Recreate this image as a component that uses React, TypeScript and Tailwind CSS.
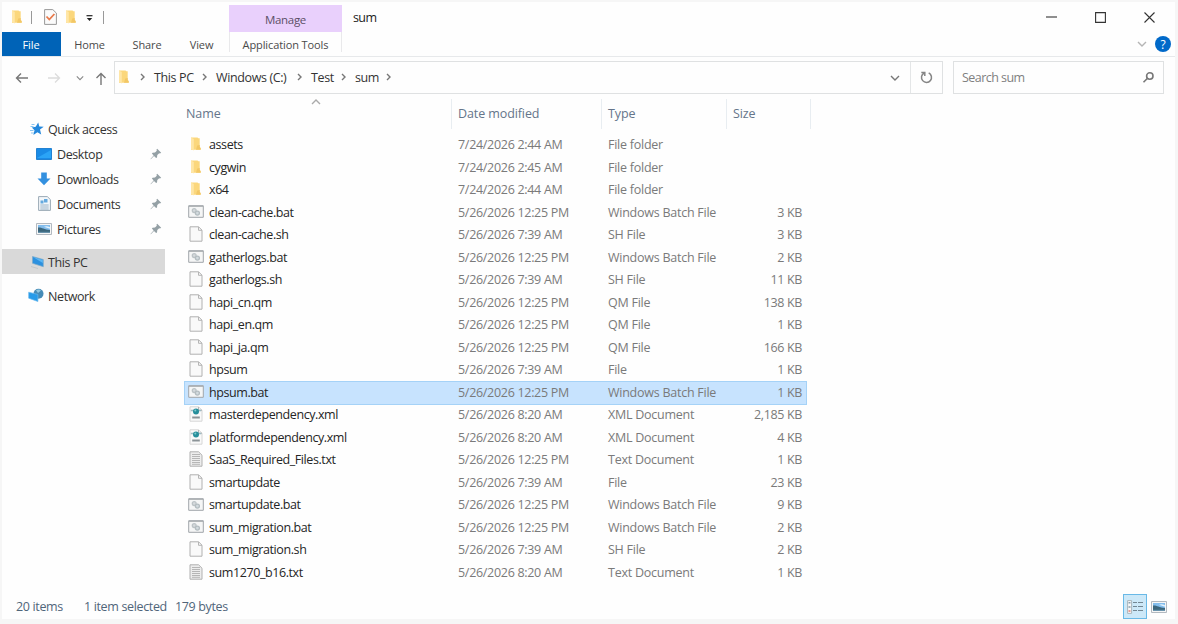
import { clsx } from "clsx";
import type { ReactNode } from "react";

type FileKind = "folder" | "batch" | "blank" | "xml" | "text";

interface FileEntry {
  name: string;
  modified: string;
  type: string;
  size?: string;
  kind: FileKind;
  selected?: boolean;
}

const files: FileEntry[] = [
  { name: "assets", modified: "7/24/2026 2:44 AM", type: "File folder", kind: "folder" },
  { name: "cygwin", modified: "7/24/2026 2:45 AM", type: "File folder", kind: "folder" },
  { name: "x64", modified: "7/24/2026 2:44 AM", type: "File folder", kind: "folder" },
  { name: "clean-cache.bat", modified: "5/26/2026 12:25 PM", type: "Windows Batch File", size: "3 KB", kind: "batch" },
  { name: "clean-cache.sh", modified: "5/26/2026 7:39 AM", type: "SH File", size: "3 KB", kind: "blank" },
  { name: "gatherlogs.bat", modified: "5/26/2026 12:25 PM", type: "Windows Batch File", size: "2 KB", kind: "batch" },
  { name: "gatherlogs.sh", modified: "5/26/2026 7:39 AM", type: "SH File", size: "11 KB", kind: "blank" },
  { name: "hapi_cn.qm", modified: "5/26/2026 12:25 PM", type: "QM File", size: "138 KB", kind: "blank" },
  { name: "hapi_en.qm", modified: "5/26/2026 12:25 PM", type: "QM File", size: "1 KB", kind: "blank" },
  { name: "hapi_ja.qm", modified: "5/26/2026 12:25 PM", type: "QM File", size: "166 KB", kind: "blank" },
  { name: "hpsum", modified: "5/26/2026 7:39 AM", type: "File", size: "1 KB", kind: "blank" },
  { name: "hpsum.bat", modified: "5/26/2026 12:25 PM", type: "Windows Batch File", size: "1 KB", kind: "batch", selected: true },
  { name: "masterdependency.xml", modified: "5/26/2026 8:20 AM", type: "XML Document", size: "2,185 KB", kind: "xml" },
  { name: "platformdependency.xml", modified: "5/26/2026 8:20 AM", type: "XML Document", size: "4 KB", kind: "xml" },
  { name: "SaaS_Required_Files.txt", modified: "5/26/2026 12:25 PM", type: "Text Document", size: "1 KB", kind: "text" },
  { name: "smartupdate", modified: "5/26/2026 7:39 AM", type: "File", size: "23 KB", kind: "blank" },
  { name: "smartupdate.bat", modified: "5/26/2026 12:25 PM", type: "Windows Batch File", size: "9 KB", kind: "batch" },
  { name: "sum_migration.bat", modified: "5/26/2026 12:25 PM", type: "Windows Batch File", size: "2 KB", kind: "batch" },
  { name: "sum_migration.sh", modified: "5/26/2026 7:39 AM", type: "SH File", size: "2 KB", kind: "blank" },
  { name: "sum1270_b16.txt", modified: "5/26/2026 8:20 AM", type: "Text Document", size: "1 KB", kind: "text" },
];

function FolderIcon() {
  return (
    <svg width="12" height="14" viewBox="0 0 12 14" className="shrink-0">
      <path d="M1 .6h6.5l.8.6h1.4v8.6l1 1.4v1.6H1z" fill="#fbd77c" />
      <path d="M1 .6 3.8 2v11.6L1 12z" fill="#ffe6a6" />
      <path d="M7.2 8.5 9.7 8v2l1 1.2v1.6H6z" fill="#f2c766" />
    </svg>
  );
}

function PageIcon({ kind }: { kind: FileKind }) {
  return (
    <svg width="14" height="16" viewBox="0 0 14 16" className="shrink-0">
      <path d="M1 .8h8.6L13 4.2v11H1z" fill={kind === "text" ? "#ededed" : "#f9f9f9"} stroke={kind === "xml" ? "#d6d6d6" : "#b0b0b0"} />
      {kind !== "text" && <path d="M9.5 1v3.3H13" fill="none" stroke="#b5b5b5" />}
      {kind === "text" && <path d="M3 3.5h8M3 5.5h8M3 7.5h8M3 9.5h8M3 11.5h8M3 13.3h8" stroke="#b0b0b0" strokeWidth=".9" />}
      {kind === "xml" && (
        <>
          <path d="M1.8 4.5h10.4" stroke="#9dbcc4" strokeWidth="1.6" />
          <circle cx="7" cy="5.6" r="3" fill="#268f9c" />
          <circle cx="6.3" cy="4.6" r="1" fill="#7fcaca" />
          <path d="M3.2 11.5h7.6" stroke="#8c9498" strokeWidth="2" />
        </>
      )}
    </svg>
  );
}

function BatchIcon() {
  return (
    <svg width="16" height="13" viewBox="0 0 16 13" className="shrink-0">
      <path d="M.7.7h14.6v11.6H.7z" fill="#f5f6f6" stroke="#a0a6aa" />
      <path d="M1 1.3h14" stroke="#a5abad" />
      <circle cx="6.2" cy="5.6" r="1.9" fill="#d5dadd" stroke="#bcc3c6" strokeWidth="1.3" />
      <circle cx="9.4" cy="8.1" r="2" fill="#d3dbdf" stroke="#b4bdc1" strokeWidth="1.3" />
    </svg>
  );
}

function PictureIcon() {
  return (
    <svg width="16" height="12" viewBox="0 0 16 12" className="shrink-0">
      <path d="M.5.5h15v11H.5z" fill="#f6f6f6" stroke="#b2b9c0" />
      <path d="M2 2h12v8H2z" fill="#83bdec" />
      <path d="M2 4.5c4-.2 6 2 12 2.4V10H2z" fill="#3b667c" />
      <path d="M2 8.8h12V10H2z" fill="#6993ac" />
      <path d="M8 3.7c2-1 4-.5 6 .6v1.4z" fill="#e5f4fd" />
    </svg>
  );
}

function FileIcon({ kind }: { kind: FileKind }) {
  if (kind === "folder") return <FolderIcon />;
  if (kind === "batch") return <BatchIcon />;
  return <PageIcon kind={kind} />;
}

function Chevron({ direction = "right", className }: { direction?: "right" | "down" | "up"; className?: string }) {
  const paths = { right: "M3 2 6 5 3 8", down: "M1 3l4 4 4-4", up: "M1 7l4-4 4 4" };
  return (
    <svg width="10" height="10" viewBox="0 0 10 10" className={clsx("shrink-0", className)}>
      <path d={paths[direction]} fill="none" stroke="currentColor" strokeWidth="1.4" />
    </svg>
  );
}

function PinIcon() {
  return (
    <svg width="12" height="12" viewBox="0 0 12 12" className="shrink-0">
      <path d="M7.2.8 11.2 4.7 10 5.4 9.2 5.2 7.3 7.1 7 9.4 6.1 10 4 7.9.8 11.2.5 10.9 3.6 7.4 1.9 5.6 2.6 4.8 5 4.6 6.8 2.8 6.5 1.6z" fill="#94a0a5" />
    </svg>
  );
}

function TitleBar() {
  return (
    <header className="flex h-[30px]">
      <div className="flex w-[227px] items-center pl-[9px]">
        <FolderIcon />
        <span className="ml-2 h-[13px] w-px bg-[#999]" />
        <svg width="13" height="16" viewBox="0 0 13 16" className="ml-3">
          <path d="M.6.6h8.2l3.6 3.5v11.3H.6z" fill="#fbfbfb" stroke="#999" />
          <path d="m2.5 7.5 2.8 3L10.4 5" fill="none" stroke="#e87a4b" strokeWidth="1.8" />
        </svg>
        <span className="ml-2 flex"><FolderIcon /></span>
        <svg width="7" height="7" viewBox="0 0 7 7" className="mt-0.5 ml-[9px]">
          <path d="M.5.7h6" stroke="#222" strokeWidth="1.2" />
          <path d="M.8 3h5.4L3.5 6z" fill="#222" />
        </svg>
        <span className="ml-[10px] h-[13px] w-px bg-[#999]" />
      </div>
      <div className="mt-[3px] flex w-[113px] items-center justify-center bg-[#e9d0fc] pt-0.5 text-[11.5px] tracking-[-0.3px] text-[#5b4f66]">
        Manage
      </div>
      <h1 className="ml-[11px] pt-2 text-[12.5px] leading-4 tracking-[-0.6px] text-[#222]">sum</h1>
      <div className="ml-auto flex items-center gap-[38px] pr-5 text-[#333]">
        <svg width="11" height="11" viewBox="0 0 11 11"><path d="M0 5h11" stroke="currentColor" strokeWidth="1.1" /></svg>
        <svg width="11" height="11" viewBox="0 0 11 11"><path d="M.6.6h9.8v9.8H.6z" fill="none" stroke="currentColor" strokeWidth="1.1" /></svg>
        <svg width="11" height="11" viewBox="0 0 11 11"><path d="m.5.5 10 10M10.5.5l-10 10" stroke="currentColor" strokeWidth="1.1" /></svg>
      </div>
    </header>
  );
}

function RibbonTabs() {
  return (
    <nav className="flex h-[25px] items-stretch border-b border-[#e7e9eb] text-[11px] leading-[25px] tracking-[-0.1px] text-[#4a4a4a]">
      <span className="w-[59px] bg-[#0063b7] pr-px text-center text-white">File</span>
      <span className="w-[57px] text-center">Home</span>
      <span className="w-[58px] text-center">Share</span>
      <span className="w-[53px] pr-0.5 text-center">View</span>
      <span className="mb-1 w-[113px] border-x border-[#e9e9eb] text-center">Application Tools</span>
      <div className="ml-auto flex items-center gap-2 pr-[4px] text-[#b5b5b5]">
        <Chevron direction="down" />
        <span className="flex size-4 items-center justify-center rounded-full bg-[#0069c9] text-[12px] text-white">?</span>
      </div>
    </nav>
  );
}

function AddressBar() {
  const crumbs = [
    { label: "This PC", width: "w-[62px]" },
    { label: "Windows (C:)", width: "w-[95px]" },
    { label: "Test", width: "w-[44px]" },
    { label: "sum", width: "w-[45px]" },
  ];
  return (
    <div className="flex h-10 items-center pl-[13px] text-[12.5px] tracking-[-0.38px] text-[#333]">
      <svg width="14" height="12" viewBox="0 0 14 12" className="mt-0.5"><path d="M6 1.5 1.5 6 6 10.5M1.5 6H13" fill="none" stroke="#777" strokeWidth="1.4" /></svg>
      <svg width="14" height="12" viewBox="0 0 14 12" className="mt-0.5 ml-[18px]"><path d="M8 1.5 12.5 6 8 10.5M12.5 6H1" fill="none" stroke="#dcdcdc" strokeWidth="1.3" /></svg>
      <Chevron direction="down" className="mt-px ml-[15px] size-2 text-[#888]" />
      <svg width="12" height="14" viewBox="0 0 12 14" className="mt-[3px] ml-[11px]"><path d="M1.5 6 6 1.5 10.5 6M6 1.5V13" fill="none" stroke="#777" strokeWidth="1.4" /></svg>
      <div className="ml-[7px] flex h-[33px] w-[829px] items-center border border-[#dfe1e2] pl-[3px]">
        <FolderIcon />
        <Chevron className="ml-2 text-[#777]" />
        <div className="flex pl-[6px]">
          {crumbs.map((crumb) => (
            <div key={crumb.label} className={clsx("flex items-center", crumb.width)}>
              <span className="pt-0.5 whitespace-nowrap">{crumb.label}</span>
              <Chevron className="mr-[6px] ml-auto text-[#777]" />
            </div>
          ))}
        </div>
        <Chevron direction="down" className="mt-0.5 mr-[10px] ml-auto text-[#777]" />
        <div className="flex h-full w-8 items-center justify-center border-l border-[#e4e6e7]">
          <svg width="13" height="13" viewBox="0 0 13 13" fill="none" stroke="#858585" strokeWidth="1.5">
            <path d="M8.7 1.9a5 5 0 1 1-4.6.1" />
            <path d="M1.3 1.5h3.5V5" />
          </svg>
        </div>
      </div>
      <div className="ml-[10px] flex h-[33px] w-[211px] items-center justify-between border border-[#dfe1e2] px-2 text-[#808080]">
        <span className="pt-0.5 tracking-[-0.55px]">Search sum</span>
        <svg width="13" height="13" viewBox="0 0 13 13" fill="none" stroke="#777" strokeWidth="1.6">
          <circle cx="7.8" cy="5" r="3.2" />
          <path d="M5.5 7.3 1.5 11.3" />
        </svg>
      </div>
    </div>
  );
}

function SidebarItem({ icon, label, pinned, root, active }: { icon: ReactNode; label: string; pinned?: boolean; root?: boolean; active?: boolean }) {
  return (
    <div className={clsx("flex h-[25px] items-center pr-[3px]", root ? "pl-[25px]" : "pl-[34px]", active && "bg-[#d9d9d9]")}>
      <span className="flex w-4 justify-center">{icon}</span>
      <span className="ml-[5px] pt-[3px]">{label}</span>
      {pinned && <span className="ml-auto"><PinIcon /></span>}
    </div>
  );
}

function Sidebar() {
  return (
    <aside className="w-[163px] shrink-0 pt-[19px] text-[12.5px] tracking-[-0.4px] text-[#333]">
      <SidebarItem
        root
        label="Quick access"
        icon={
          <svg width="14" height="14" viewBox="0 0 14 14" className="ml-1 shrink-0">
            <path d="m8.2.5 1.1 4.1 4.4.1-3.7 2.9 1.2 4.9-3.8-2.3-4 2.8 1.1-4.8L1.8 5.4l3.9-.6z" fill="#2488dc" />
            <path d="M1.5 2.5h3M.5 4.5h3M0 8.5h3.5M1 11h3" stroke="#8bc5f0" />
          </svg>
        }
      />
      <SidebarItem
        pinned
        label="Desktop"
        icon={
          <svg width="16" height="12" viewBox="0 0 16 12">
            <path d="M.5.5h15v11H.5z" fill="#1a8be6" stroke="#2382d2" />
            <path d="m1 10 14-8v8z" fill="#2ba4f6" />
          </svg>
        }
      />
      <SidebarItem
        pinned
        label="Downloads"
        icon={
          <svg width="14" height="14" viewBox="0 0 14 14"><path d="M4.2.5h5.6v6h3.7L7 13.3.5 6.5h3.7z" fill="#3390df" /></svg>
        }
      />
      <SidebarItem
        pinned
        label="Documents"
        icon={
          <svg width="13" height="15" viewBox="0 0 13 15">
            <path d="M.6.6h8.7l3.1 3v10.8H.6z" fill="#f3f7fa" stroke="#9aa9b5" />
            <path d="M2.5 4.5h3v3h-3zM6 3h3.5v3.5H6z" fill="#65a9de" />
            <path d="M2.3 9h8.4M2.3 11h8.4M2.3 13h8.4" stroke="#9ab2c6" />
          </svg>
        }
      />
      <SidebarItem pinned label="Pictures" icon={<PictureIcon />} />
      <div className="mt-2">
        <SidebarItem
          root
          active
          label="This PC"
          icon={
            <svg width="13" height="14" viewBox="0 0 13 14" className="ml-[5px] shrink-0">
              <path d="m1.5 1.5 10.8 3v7.2L1.5 8.3z" fill="#2d91df" stroke="#7dabc9" strokeWidth=".7" />
              <path d="m2 2 9.8 2.9v3.2z" fill="#5db7f3" />
              <path d="m0 11.5 7 2" stroke="#c2c7ca" />
            </svg>
          }
        />
      </div>
      <div className="mt-[9px]">
        <SidebarItem
          root
          label="Network"
          icon={
            <svg width="16" height="15" viewBox="0 0 16 15" className="ml-px shrink-0">
              <circle cx="10.5" cy="5.8" r="5" fill="#458bb7" />
              <path d="M8 2.2c2-1.3 4-.7 5 .3l-3 2.6z" fill="#93c7df" />
              <path d="m.7 4.2 9.2 2.2v7.1L.7 10.2z" fill="#279be9" stroke="#68b9ef" strokeWidth=".7" />
            </svg>
          }
        />
      </div>
    </aside>
  );
}

function FileRow({ file }: { file: FileEntry }) {
  return (
    <div
      className={clsx(
        "grid h-[22.5px] w-[623px] grid-cols-[268px_150px_125px_80px] items-center",
        file.selected && "bg-[#c7e3fe] shadow-[0_-1px_0_#a5d2f7,0_1px_0_#a5d2f7,inset_1px_0_0_#a5d2f7,inset_-1px_0_0_#a5d2f7]",
      )}
    >
      <div className="flex items-center">
        <span className="flex w-[24px] justify-center pb-0.5"><FileIcon kind={file.kind} /></span>
        <span className="ml-px pt-px tracking-[-0.41px] text-[#252525]">{file.name}</span>
      </div>
      <span className="pt-px pl-[6px] tracking-[-0.3px]">{file.modified}</span>
      <span className="pt-px pl-[6px] tracking-[-0.25px]">{file.type}</span>
      <span className="pt-px pr-[5px] text-right">{file.size}</span>
    </div>
  );
}

function FileList() {
  return (
    <main className="ml-[19px] grow text-[12.5px] tracking-[-0.35px] whitespace-nowrap text-[#7a7a7a]">
      <div className="relative mt-[2px] mb-[9px] grid h-[26px] w-[627px] grid-cols-[268px_150px_125px_84px] leading-[30px] tracking-[-0.1px] text-[#65758a]">
        <span className="border-r border-[#e8edf1] pl-[2px]">Name</span>
        <span className="border-r border-[#e8edf1] pl-[6px]">Date modified</span>
        <span className="border-r border-[#e8edf1] pl-[6px]">Type</span>
        <span className="border-r border-[#e8edf1] pl-[6px]">Size</span>
        <Chevron direction="up" className="absolute -top-0.5 left-[127px] text-[#aaa]" />
      </div>
      {files.map((file) => (
        <FileRow key={file.name} file={file} />
      ))}
    </main>
  );
}

function StatusBar() {
  return (
    <footer className="flex h-[25px] items-center pl-[14px] text-[12.5px] tracking-[-0.35px] text-[#50657a]">
      <span className="w-[68px] pt-0.5">20 items</span>
      <span className="w-[91px] pt-0.5 whitespace-nowrap">1 item selected</span>
      <span className="pt-0.5">179 bytes</span>
      <div className="ml-auto flex items-center gap-1 pr-2">
        <span className="flex h-[25px] w-6 items-center justify-center border border-[#69b9e7] bg-[#cce8f8]">
          <svg width="16" height="14" viewBox="0 0 16 14">
            <path d="M.6.6h4v12.8h-4z" fill="#f7f7f7" stroke="#a9b5bb" />
            <path d="M1.5 2.8h2M1.5 7h2" stroke="#86a0b0" strokeWidth="1.4" />
            <path d="M1.5 11h2" stroke="#df7467" strokeWidth="1.4" />
            <path d="M6 2.5h4M11 2.5h5M6 6.5h4M11 6.5h5M6 10.5h4M11 10.5h5" stroke="#738793" />
          </svg>
        </span>
        <PictureIcon />
      </div>
    </footer>
  );
}

export default function App() {
  return (
    <div className="h-[624px] w-[1178px] overflow-hidden bg-[#f6f6f6] pt-[2px] pl-[2px] font-['Open_Sans','Noto_Sans',sans-serif]">
      <div className="flex h-[617px] w-[1173px] flex-col bg-[#fefefe]">
        <TitleBar />
        <RibbonTabs />
        <AddressBar />
        <div className="flex h-[497px] shrink-0">
          <Sidebar />
          <FileList />
        </div>
        <StatusBar />
      </div>
    </div>
  );
}
